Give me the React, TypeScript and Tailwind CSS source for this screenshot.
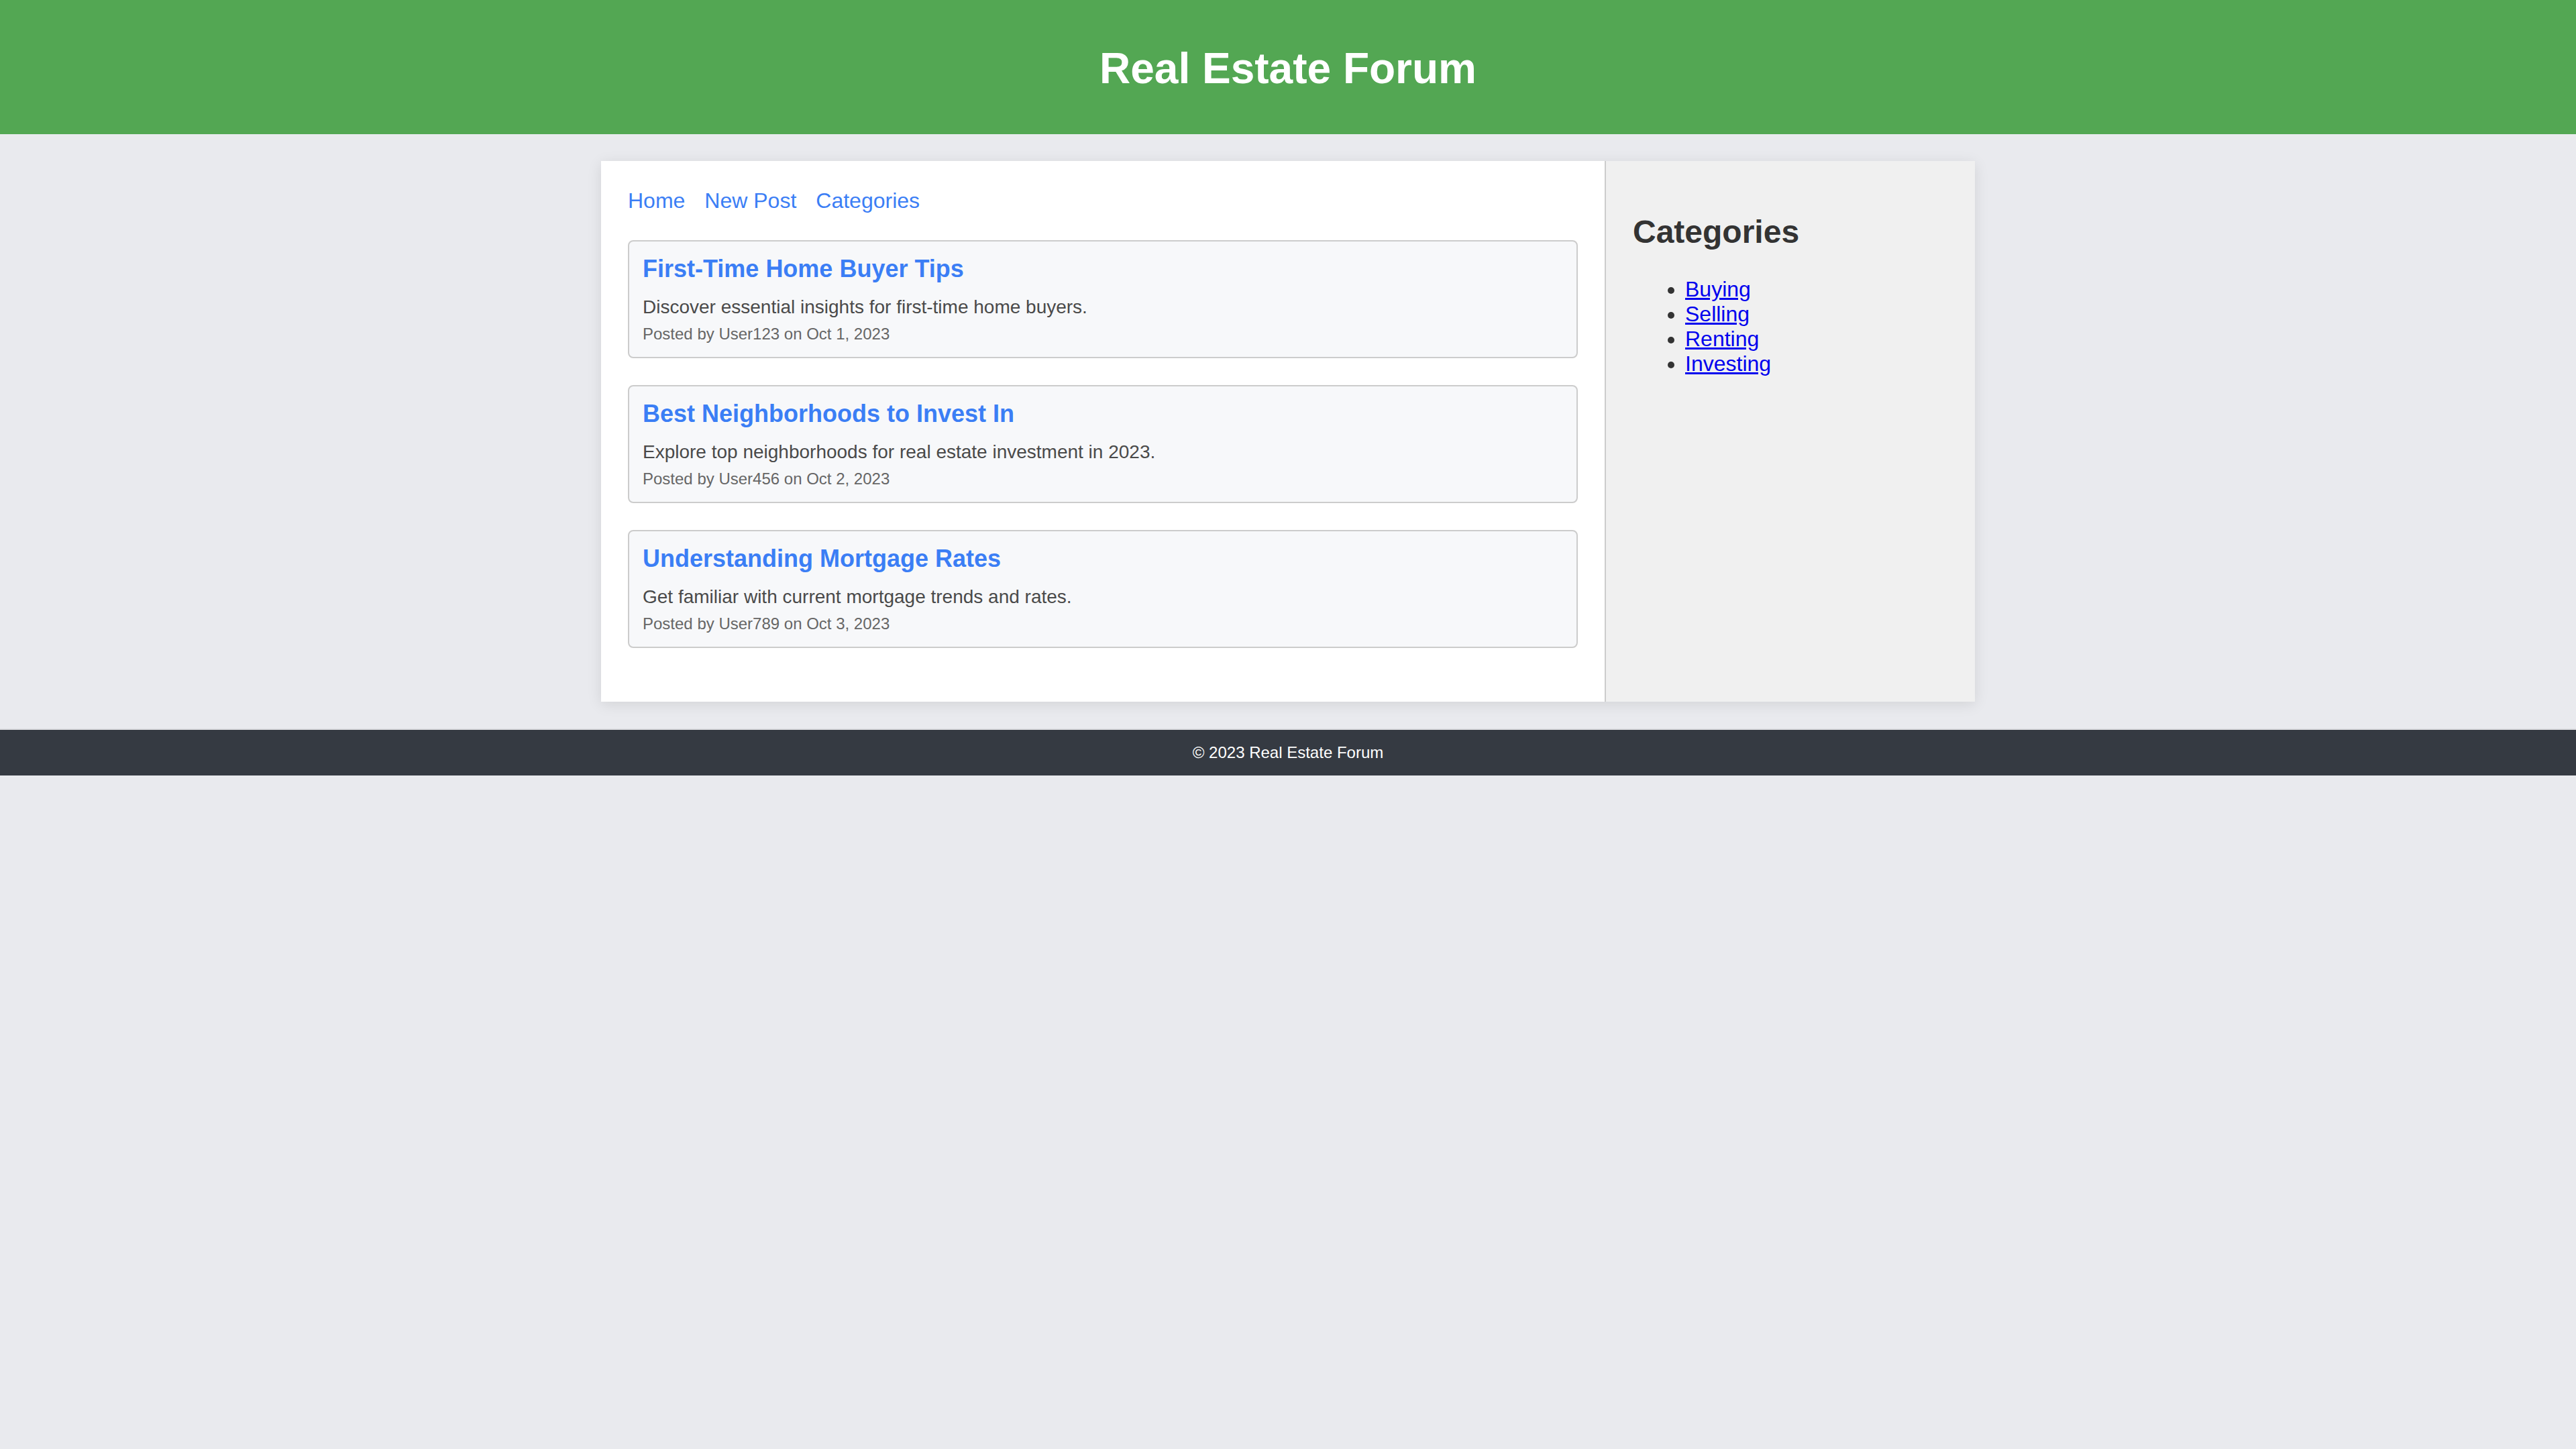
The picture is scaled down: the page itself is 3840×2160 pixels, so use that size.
import React from 'react';

type Post = {
  id: number;
  titulo: string;
  resumen: string;
  autor: string;
  fecha: string;
};

const posts: Post[] = [
  {
    id: 1,
    titulo: 'First-Time Home Buyer Tips',
    resumen: 'Discover essential insights for first-time home buyers.',
    autor: 'User123',
    fecha: 'Oct 1, 2023',
  },
  {
    id: 2,
    titulo: 'Best Neighborhoods to Invest In',
    resumen: 'Explore top neighborhoods for real estate investment in 2023.',
    autor: 'User456',
    fecha: 'Oct 2, 2023',
  },
  {
    id: 3,
    titulo: 'Understanding Mortgage Rates',
    resumen: 'Get familiar with current mortgage trends and rates.',
    autor: 'User789',
    fecha: 'Oct 3, 2023',
  },
];

const categorias = ['Buying', 'Selling', 'Renting', 'Investing'];

function PostCard({ post }: { post: Post }) {
  return (
    <div className="mb-[40px] rounded-[8px] border-2 border-[#cccccc] bg-[#f7f8fa] p-[20px]">
      <h3 className="mb-[20px] text-[36px] font-bold leading-[42px] text-[#3b7ef5]">
        {post.titulo}
      </h3>
      <p className="mb-[10px] text-[28px] leading-[32px] text-[#4a4a4a]">{post.resumen}</p>
      <p className="text-[24px] leading-[28px] text-[#666666]">
        Posted by {post.autor} on {post.fecha}
      </p>
    </div>
  );
}

export default function App() {
  return (
    <div className="min-h-[2160px] bg-[#e9eaee] font-['Liberation_Sans',Arial,sans-serif]">
      {/* Cabecera */}
      <header className="flex h-[200px] items-center justify-center bg-[#53a753] pt-[4px]">
        <h1 className="text-[64px] font-bold leading-[74px] text-white">Real Estate Forum</h1>
      </header>

      <div className="mx-auto mt-[40px] flex w-[2048px] bg-white shadow-[0_4px_20px_rgba(0,0,0,0.1)]">
        {/* Contenido principal */}
        <main className="w-[1496px] p-[40px]">
          <nav className="mb-[40px] flex h-[38px] items-center gap-[29px] text-[32px] text-[#3b7ef5]">
            <a href="#">Home</a>
            <a href="#">New Post</a>
            <a href="#">Categories</a>
          </nav>
          {posts.map(post => (
            <PostCard key={post.id} post={post} />
          ))}
        </main>

        {/* Barra lateral */}
        <aside className="w-[552px] border-l-2 border-[#cccccc] bg-[#f0f0f0] px-[40px] pt-[78px]">
          <h2 className="text-[48px] font-bold leading-[55px] text-[#333333]">Categories</h2>
          <ul className="mt-[40px] list-disc pl-[78px] text-[32px] leading-[37px] text-[#333333]">
            {categorias.map(cat => (
              <li key={cat}>
                <a href="#" className="text-[#0000ee] underline">
                  {cat}
                </a>
              </li>
            ))}
          </ul>
        </aside>
      </div>

      <footer className="mt-[40px] flex h-[70px] items-center justify-center border-t-2 border-[#dcdde0] bg-[#353a42]">
        <p className="text-[24px] text-white">© 2023 Real Estate Forum</p>
      </footer>
    </div>
  );
}
